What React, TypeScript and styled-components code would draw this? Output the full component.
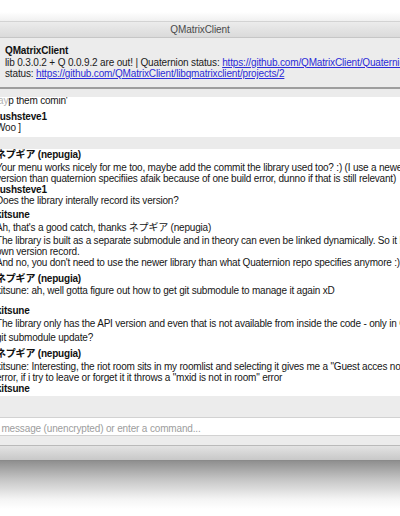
import React from 'react';
import styled, { createGlobalStyle } from 'styled-components';

const GlobalStyle = createGlobalStyle`
  html, body {
    margin: 0;
    padding: 0;
    background: #fff;
  }
  body {
    font-family: 'Liberation Sans', Arial, 'Noto Sans CJK JP', sans-serif;
  }
`;

const Screen = styled.div`
  width: 400px;
  height: 516px;
  overflow: hidden;
  display: flex;
  flex-direction: column;
  background: #fff;
`;

const TopShadow = styled.div`
  height: 21px;
  flex-shrink: 0;
  background: linear-gradient(#fff 0, #fff 12px, #f0f0f0 21px);
`;

const Window = styled.div`
  display: flex;
  flex-direction: column;
  flex-shrink: 0;
`;

const TitleBar = styled.div`
  height: 17px;
  box-sizing: border-box;
  border-top: 1px solid #d3d3d3;
  border-bottom: 1px solid #c6c6c6;
  background: linear-gradient(#ececec, #dadada);
  color: #4b4b4b;
  font-size: 10px;
  line-height: 15px;
  letter-spacing: -0.1px;
  text-align: center;
`;

const Topic = styled.div`
  height: 49px;
  box-sizing: border-box;
  padding: 7px 5px 0;
  background: #ececec;
  font-size: 10px;
  line-height: 11.5px;
  letter-spacing: -0.15px;
  color: #1b1b1b;
  white-space: nowrap;
  overflow: hidden;
`;

const TopicTitle = styled.div`
  font-weight: bold;
  color: #111;
`;

const Link = styled.a`
  color: #2b2bd8;
  text-decoration: underline;
`;

const Separator = styled.div`
  height: 2px;
  background: #9e9e9e;
`;

const Band = styled.div<{ $height: number; $gap?: number }>`
  height: ${(p) => p.$height}px;
  margin-top: ${(p) => p.$gap ?? 0}px;
  margin-left: -10px;
  background: #ebebeb;
`;

const MessageList = styled.div`
  height: 299px;
  background: #fff;
  overflow: hidden;
`;

const Timeline = styled.div`
  margin-top: -2px;
  margin-left: -4px;
  font-size: 10px;
  line-height: 11px;
  letter-spacing: -0.2px;
  color: #161616;
  white-space: nowrap;
`;

const Author = styled.div<{ $gap: number }>`
  margin-top: ${(p) => p.$gap}px;
  font-weight: bold;
  color: #111;
`;

const Body = styled.div<{ $gap: number }>`
  margin-top: ${(p) => p.$gap}px;
`;

const Faded = styled.span`
  color: #b4b4b4;
`;

const Composer = styled.div`
  height: 49px;
  box-sizing: border-box;
  padding-top: 21px;
  background: #ececec;
`;

const InputBox = styled.div`
  height: 19px;
  box-sizing: border-box;
  border-top: 1px solid #d2d2d2;
  border-bottom: 1px solid #d2d2d2;
  background: #fff;
  overflow: hidden;
  white-space: nowrap;
`;

const Placeholder = styled.span`
  display: inline-block;
  margin-left: -32px;
  color: #9d9d9d;
  font-size: 10px;
  letter-spacing: -0.15px;
  line-height: 17px;
`;

const BottomBar = styled.div`
  height: 16px;
  box-sizing: border-box;
  border-top: 1px solid #bababa;
  border-bottom: 1px solid #8a8a8a;
  background: linear-gradient(#e3e3e3, #c8c8c8);
`;

const BottomShadow = styled.div`
  flex: 1;
  background: linear-gradient(#8f8f8f 0, #c4c4c4 18px, #f4f4f4 38px, #fff 48px);
`;

type Item =
  | { kind: 'author'; name: string; gap: number }
  | { kind: 'body'; lines: React.ReactNode[]; gap: number }
  | { kind: 'band'; height: number; gap: number };

const NEPUGIA = 'ネプギア (nepugia)';

const items: Item[] = [
  { kind: 'body', gap: 0, lines: [<><Faded>lay</Faded>p them comin'</>] },
  { kind: 'author', gap: 5, name: 'rushsteve1' },
  { kind: 'body', gap: 0, lines: ['Woo ]'] },
  { kind: 'band', gap: 4, height: 12 },
  { kind: 'author', gap: 0, name: NEPUGIA },
  {
    kind: 'body',
    gap: 2,
    lines: [
      'Your menu works nicely for me too, maybe add the commit the library used too? :) (I use a newer',
      'version than quaternion specifiies afaik because of one build error, dunno if that is still relevant)',
    ],
  },
  { kind: 'author', gap: 0, name: 'rushsteve1' },
  { kind: 'body', gap: 0, lines: ['Does the library interally record its version?'] },
  { kind: 'author', gap: 3, name: 'kitsune' },
  { kind: 'body', gap: 2, lines: ['Ah, that\'s a good catch, thanks ネプギア (nepugia)'] },
  {
    kind: 'body',
    gap: 2,
    lines: [
      'The library is built as a separate submodule and in theory can even be linked dynamically. So it has its',
      'own version record.',
      'And no, you don\'t need to use the newer library than what Quaternion repo specifies anymore :)',
    ],
  },
  { kind: 'author', gap: 5, name: NEPUGIA },
  { kind: 'body', gap: 1, lines: ['kitsune: ah, well gotta figure out how to get git submodule to manage it again xD'] },
  { kind: 'author', gap: 9, name: 'kitsune' },
  {
    kind: 'body',
    gap: 2,
    lines: ['The library only has the API version and even that is not available from inside the code - only in CMake'],
  },
  { kind: 'body', gap: 3, lines: ['git submodule update?'] },
  { kind: 'author', gap: 5, name: NEPUGIA },
  {
    kind: 'body',
    gap: 2,
    lines: [
      'kitsune: Interesting, the riot room sits in my roomlist and selecting it gives me a "Guest acces not allowed"',
      'error, if i try to leave or forget it it throws a "mxid is not in room" error',
    ],
  },
  { kind: 'author', gap: 0, name: 'kitsune' },
];

const App = () => {
  return (
    <>
      <GlobalStyle />
      <Screen>
        <TopShadow />
        <Window>
          <TitleBar>QMatrixClient</TitleBar>
          <Topic>
            <TopicTitle>QMatrixClient</TopicTitle>
            <div>
              lib 0.3.0.2 + Q 0.0.9.2 are out! | Quaternion status:{' '}
              <Link href="#">https://github.com/QMatrixClient/Quaternion/projects/1</Link> | libqmatrixclient
            </div>
            <div>
              status: <Link href="#">https://github.com/QMatrixClient/libqmatrixclient/projects/2</Link>
            </div>
          </Topic>
          <Separator />
          <Band $height={8} />
          <MessageList>
            <Timeline>
              {items.map((item, i) => {
                if (item.kind === 'author') {
                  return (
                    <Author key={i} $gap={item.gap}>
                      {item.name}
                    </Author>
                  );
                }
                if (item.kind === 'band') {
                  return <Band key={i} $height={item.height} $gap={item.gap} />;
                }
                return (
                  <Body key={i} $gap={item.gap}>
                    {item.lines.map((line, j) => (
                      <div key={j}>{line}</div>
                    ))}
                  </Body>
                );
              })}
            </Timeline>
          </MessageList>
          <Composer>
            <InputBox>
              <Placeholder>Send a message (unencrypted) or enter a command...</Placeholder>
            </InputBox>
          </Composer>
          <BottomBar />
        </Window>
        <BottomShadow />
      </Screen>
    </>
  );
};

export default App;
